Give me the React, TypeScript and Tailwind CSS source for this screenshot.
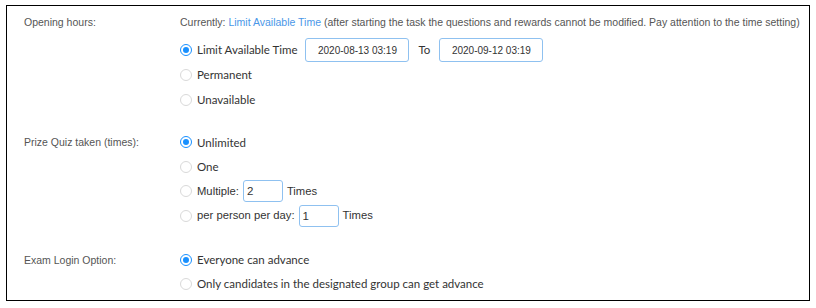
import React, { useState } from 'react';

type RadioProps = {
    checked: boolean;
    onChange: () => void;
    children: React.ReactNode;
    className?: string;
};

const Radio: React.FC<RadioProps> = ({ checked, onChange, children, className }) => (
    <label className={`flex items-center cursor-pointer ${className ?? ''}`} onClick={onChange}>
        <span
            className={`mr-[5px] flex h-[12px] w-[12px] shrink-0 items-center justify-center rounded-full border bg-white ${
                checked ? 'border-[#1890ff]' : 'border-[#d9d9d9]'
            }`}
        >
            {checked && <span className="h-[6px] w-[6px] rounded-full bg-[#1890ff]" />}
        </span>
        <span className="flex items-center whitespace-nowrap text-[11.5px] text-[#333]">{children}</span>
    </label>
);

// count inputs use the Arial-ish font, like the text around them
const CountRow: React.FC<{ label: string; value: string; onChange: (v: string) => void }> = ({ label, value, onChange }) => (
    <span className="flex items-center font-['Liberation_Sans',Arial,sans-serif] text-[11.25px]">
        <span className="mr-[4px]">{label}</span>
        <input
            value={value}
            onChange={(e) => onChange(e.target.value)}
            className="h-[22px] w-[40px] rounded-[3px] border border-[#8fc1f0] bg-white px-[3px] text-[11.5px] text-[#333] outline-none"
        />
        <span className="ml-[4px]">Times</span>
    </span>
);

const Label: React.FC<{ children: React.ReactNode }> = ({ children }) => (
    <div className="w-[156px] shrink-0 pt-[5px] font-['Liberation_Sans',Arial,sans-serif] text-[10.5px] text-[#555]">
        {children}
    </div>
);

export default function App() {
    const [hours, setHours] = useState('limit');
    const [taken, setTaken] = useState('unlimited');
    const [login, setLogin] = useState('everyone');
    const [multiple, setMultiple] = useState('2');
    const [perDay, setPerDay] = useState('1');

    return (
        <div className="h-[308px] w-[816px] bg-white pl-[6px] pt-[5px] font-['Lato',sans-serif]">
            <div className="flex h-[296px] w-[804px] flex-col border border-black bg-white pl-[17px] pt-[4px]">
                {/* Opening hours */}
                <div className="flex">
                    <Label>Opening hours:</Label>
                    <div className="flex flex-col">
                        <div className="h-[24px] whitespace-nowrap pt-[5px] font-['Liberation_Sans',Arial,sans-serif] text-[10.5px] text-[#555]">
                            Currently: <span className="text-[#4a97e8]">Limit Available Time</span> (after starting the task the questions and rewards cannot be modified. Pay attention to the time setting)
                        </div>
                        <div className="mt-[4px] flex h-[24px] items-center">
                            <Radio checked={hours === 'limit'} onChange={() => setHours('limit')}>
                                Limit Available Time
                            </Radio>
                            <div className="ml-[8px] flex h-[24px] w-[104px] items-center justify-center rounded-[3px] border border-[#8fc1f0] font-['Liberation_Sans',Arial,sans-serif] text-[10px] text-[#333]">
                                2020-08-13 03:19
                            </div>
                            <span className="mx-[9px] text-[11.5px] text-[#333]">To</span>
                            <div className="flex h-[24px] w-[104px] items-center justify-center rounded-[3px] border border-[#8fc1f0] font-['Liberation_Sans',Arial,sans-serif] text-[10px] text-[#333]">
                                2020-09-12 03:19
                            </div>
                        </div>
                        <Radio className="h-[25px]" checked={hours === 'permanent'} onChange={() => setHours('permanent')}>
                            Permanent
                        </Radio>
                        <Radio className="h-[25px]" checked={hours === 'unavailable'} onChange={() => setHours('unavailable')}>
                            Unavailable
                        </Radio>
                    </div>
                </div>

                {/* Prize quiz */}
                <div className="mt-[18px] flex">
                    <Label>Prize Quiz taken (times):</Label>
                    <div className="flex flex-col">
                        <Radio className="h-[24.5px]" checked={taken === 'unlimited'} onChange={() => setTaken('unlimited')}>
                            Unlimited
                        </Radio>
                        <Radio className="h-[24.5px]" checked={taken === 'one'} onChange={() => setTaken('one')}>
                            One
                        </Radio>
                        <Radio className="h-[24.5px]" checked={taken === 'multiple'} onChange={() => setTaken('multiple')}>
                            <CountRow label="Multiple:" value={multiple} onChange={setMultiple} />
                        </Radio>
                        <Radio className="h-[24.5px]" checked={taken === 'perday'} onChange={() => setTaken('perday')}>
                            <CountRow label="per person per day:" value={perDay} onChange={setPerDay} />
                        </Radio>
                    </div>
                </div>

                {/* Exam login */}
                <div className="mt-[20px] flex">
                    <Label>Exam Login Option:</Label>
                    <div className="flex flex-col">
                        <Radio className="h-[24px]" checked={login === 'everyone'} onChange={() => setLogin('everyone')}>
                            Everyone can advance
                        </Radio>
                        <Radio className="h-[24px]" checked={login === 'group'} onChange={() => setLogin('group')}>
                            Only candidates in the designated group can get advance
                        </Radio>
                    </div>
                </div>
            </div>
        </div>
    );
}
